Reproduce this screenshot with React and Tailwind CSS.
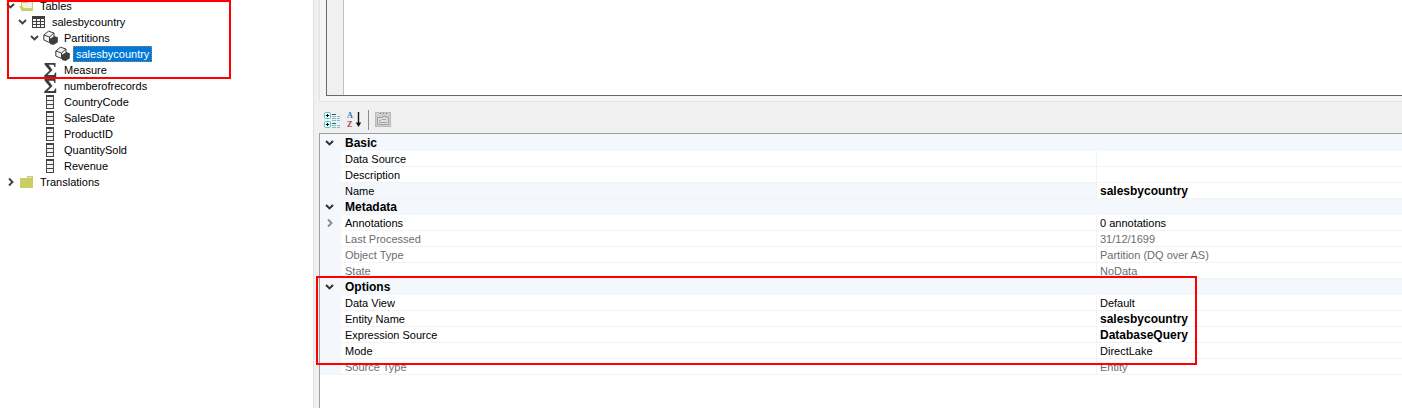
import React from "react";

const Chevron = ({ open, className = "" }) => (
  <svg viewBox="0 0 12 12" className={"h-3 w-3 " + className} fill="none" stroke="currentColor" strokeWidth="1.9" aria-hidden="true">
    <path d={open ? "M2 4 5.500 7.500 9 4" : "M4 2.500 7.500 6 4 9.500"} />
  </svg>
);

const FolderIcon = () => (
  <svg viewBox="0 0 16 16" className="h-4 w-4">
    <path d="M1 4h7V2h6v12H1z" fill="#cccc66" />
    <path d="M9 3.500h4" stroke="#e4e4b0" strokeWidth="1" />
  </svg>
);

const OpenFolderIcon = () => (
  <svg viewBox="0 0 16 16" className="h-4 w-4">
    <path d="M2 3h5V2h7v11H2z" fill="#cccc66" />
    <path d="M3 5h6V4h4v6H3z" fill="#f1f1e4" />
    <path d="M0 8h3l2 2h9v3H3z" fill="#cccc66" />
  </svg>
);

const TableIcon = () => (
  <svg viewBox="0 0 16 16" className="h-4 w-4">
    <rect x="1" y="2" width="13" height="12" fill="#3f3f3f" />
    <path d="M2 5h3v2H2zM6 5h3v2H6zM10 5h3v2h-3zM2 8h3v2H2zM6 8h3v2H6zM10 8h3v2h-3zM2 11h3v2H2zM6 11h3v2H6zM10 11h3v2h-3z" fill="#f6f6f6" />
  </svg>
);

const PartitionIcon = () => (
  <svg viewBox="0 0 16 16" className="h-4 w-4" strokeLinejoin="round">
    <path d="M7 8.500 11 6l3.800 1.200v5L10.500 15 7 14z" fill="#3d3d3d" />
    <path d="M.8 5 5.500 1.200 11 3V7L6.500 9.500V12.500L.8 10z" fill="#f4f4f4" stroke="#3d3d3d" strokeWidth="1" />
    <path d="M.8 5 6.500 7 11 3M6.500 7v5.500" fill="none" stroke="#3d3d3d" strokeWidth="1" />
  </svg>
);

const SigmaIcon = () => (
  <svg viewBox="0 0 16 16" className="h-4 w-4">
    <path d="M1.500 1h11v4h-1l-1-2.200H5.500L9.500 8l-5 5H11l1.200-2.500h1V15h-12v-1.500L6.500 8.600 1.500 2.500z" fill="#3d3d3d" />
  </svg>
);

const ColumnIcon = () => (
  <svg viewBox="0 0 16 16" className="h-4 w-4">
    <rect x="3" y="1" width="8" height="14" fill="#454545" />
    <path d="M4 3h6v3H4zM4 7h6v3H4zM4 11h6v3H4z" fill="#f4f4f4" />
  </svg>
);

const tree = [
  { label: "Tables", indent: "pl-[5px]", icon: OpenFolderIcon, open: true },
  { label: "salesbycountry", indent: "pl-[17px]", icon: TableIcon, open: true },
  { label: "Partitions", indent: "pl-[29px]", icon: PartitionIcon, open: true },
  { label: "salesbycountry", indent: "pl-[41px]", icon: PartitionIcon, selected: true },
  { label: "Measure", indent: "pl-[29px]", icon: SigmaIcon },
  { label: "numberofrecords", indent: "pl-[29px]", icon: SigmaIcon },
  { label: "CountryCode", indent: "pl-[29px]", icon: ColumnIcon },
  { label: "SalesDate", indent: "pl-[29px]", icon: ColumnIcon },
  { label: "ProductID", indent: "pl-[29px]", icon: ColumnIcon },
  { label: "QuantitySold", indent: "pl-[29px]", icon: ColumnIcon },
  { label: "Revenue", indent: "pl-[29px]", icon: ColumnIcon },
  { label: "Translations", indent: "pl-[5px]", icon: FolderIcon, open: false },
];

const groups = [
  {
    title: "Basic",
    rows: [
      { name: "Data Source", value: "" },
      { name: "Description", value: "" },
      { name: "Name", value: "salesbycountry", bold: true, active: true },
    ],
  },
  {
    title: "Metadata",
    rows: [
      { name: "Annotations", value: "0 annotations", expandable: true },
      { name: "Last Processed", value: "31/12/1699", readOnly: true },
      { name: "Object Type", value: "Partition (DQ over AS)", readOnly: true },
      { name: "State", value: "NoData", readOnly: true },
    ],
  },
  {
    title: "Options",
    rows: [
      { name: "Data View", value: "Default" },
      { name: "Entity Name", value: "salesbycountry", bold: true },
      { name: "Expression Source", value: "DatabaseQuery", bold: true },
      { name: "Mode", value: "DirectLake" },
      { name: "Source Type", value: "Entity", readOnly: true },
    ],
  },
];

function TreeItem({ label, indent, icon: Icon, open, selected }) {
  return (
    <li className={"flex h-4 items-center " + indent}>
      {open === undefined ? (
        <span className="w-3 shrink-0" />
      ) : (
        <button type="button" aria-label={"Toggle " + label} aria-expanded={open} className="shrink-0 text-[#404040]">
          <Chevron open={open} />
        </button>
      )}
      <span className="ml-[2px] shrink-0">
        <Icon />
      </span>
      <button
        type="button"
        className={
          "ml-[2px] h-4 px-[3px] leading-4 whitespace-nowrap " +
          (selected ? "bg-[#0078d7] text-white outline-1 -outline-offset-1 outline-dotted outline-[#ff8728]/60" : "")
        }
      >
        {label}
      </button>
    </li>
  );
}

function Toolbar() {
  return (
    <div role="toolbar" aria-label="Property view" className="flex h-[31px] items-center gap-[6px] border-t border-[#e3e3e3] pt-[6px] pl-[5px]">
      <button type="button" aria-label="Categorized">
        <svg viewBox="0 0 16 16" className="h-4 w-4">
          <g fill="#e8ffff" stroke="#5cc4c4">
            <rect x=".5" y=".5" width="6" height="6" rx="1" />
            <rect x=".5" y="9.500" width="6" height="6" rx="1" />
          </g>
          <path d="M2 3.500h3M3.500 2v3M2 12.500h3M3.500 11v3" stroke="#000" />
          <path d="M8 2.500h4M8 11.500h4" stroke="#555" />
          <path d="M8 4.500h4M8 6.500h4M8 8.500h4M8 13.500h4M8 15.500h4M13 4.500h3M13 6.500h3M13 8.500h3M13 13.500h3M13 15.500h3" stroke="#7cc0d4" />
        </svg>
      </button>
      <button type="button" aria-label="Alphabetical">
        <svg viewBox="0 0 16 20" className="h-5 w-4">
          <text x="1" y="8" fontSize="8" fontWeight="700" fontFamily="Liberation Serif, serif" fill="#2f75c0">A</text>
          <text x="1" y="17" fontSize="8" fontWeight="700" fontFamily="Liberation Serif, serif" fill="#974848">Z</text>
          <path d="M12.500 2v13" stroke="#111" strokeWidth="1.400" />
          <path d="M9.800 12.500h5.400L12.500 17z" fill="#111" />
        </svg>
      </button>
      <span className="h-5 w-px bg-[#8c8c8c]" />
      <button type="button" aria-label="Property pages" disabled>
        <svg viewBox="0 0 16 16" className="h-4 w-4">
          <rect x=".5" y=".5" width="15" height="14" fill="#cfcfcf" stroke="#bababa" />
          <path d="M5 1.500h1M8 1.500h1M11 1.500h1" stroke="#777" />
          <path d="M2.500 5.500h5v-1h4v1h2v7h-11z" fill="#dedede" stroke="#a0a0a0" />
          <path d="M4 8.500h2M7 7.500h4M4 10.500h8" stroke="#a4a4a4" />
        </svg>
      </button>
    </div>
  );
}

function PropertyGrid() {
  return (
    <table className="w-full table-fixed border-collapse">
      <colgroup>
        <col className="w-[21px]" />
        <col />
        <col className="w-[306px]" />
      </colgroup>
      {groups.map((group) => (
        <tbody key={group.title}>
          <tr className="h-4 bg-[#f4f7fc]">
            <td className="p-0 pl-1">
              <button type="button" aria-label={"Collapse " + group.title} className="block text-[#303030]">
                <Chevron open />
              </button>
            </td>
            <th colSpan={2} scope="rowgroup" className="p-0 pl-1 text-left text-xs leading-4 font-bold">
              {group.title}
            </th>
          </tr>
          {group.rows.map((row) => (
            <tr key={row.name} className={"h-4 " + (row.readOnly ? "text-[#6d6d6d]" : "")}>
              <td className="bg-[#f4f7fc] p-0 pl-1">
                {row.expandable && (
                  <button type="button" aria-label={"Expand " + row.name} className="block text-[#8a8a8a]">
                    <Chevron open={false} />
                  </button>
                )}
              </td>
              <th
                scope="row"
                className={
                  "p-0 pl-1 text-left leading-4 font-normal shadow-[inset_0_-1px_#f0f4fa] " +
                  (row.active ? "bg-[#f4f7fc]" : "")
                }
              >
                {row.name}
              </th>
              <td
                className={
                  "p-0 pl-1 leading-4 whitespace-nowrap shadow-[inset_1px_-1px_#f0f4fa] " +
                  (row.bold ? "text-xs font-bold" : "")
                }
              >
                {row.value}
              </td>
            </tr>
          ))}
        </tbody>
      ))}
    </table>
  );
}

export default function App() {
  return (
    <div className="flex h-screen overflow-hidden bg-[#f0f0f0] font-['Liberation_Sans',Arial,sans-serif] text-[11px] text-black">
      <nav aria-label="Model explorer" className="relative w-[314px] shrink-0 overflow-hidden border-r border-[#e0e0e0] bg-white">
        <ul className="-mt-[2px]">
          {tree.map((item, i) => (
            <TreeItem key={i} {...item} />
          ))}
        </ul>
        <div className="pointer-events-none absolute top-0 left-[7px] h-[79px] w-[224px] border-2 border-[#ff0000]" />
      </nav>
      <main className="ml-[5px] flex min-w-0 flex-1 flex-col">
        <section aria-label="Editor" className="h-[101px] shrink-0 border-l border-[#e3e3e3] bg-[#f5f5f5] pb-[5px] pl-[6px]">
          <div className="flex h-full border-b border-l border-[#696969] bg-white">
            <div className="w-[17px] border-r border-[#c0c0c0] bg-[#f0f0f0]" />
            <textarea aria-label="Expression" className="min-w-0 flex-1 resize-none outline-none" />
          </div>
        </section>
        <Toolbar />
        <section aria-label="Properties" className="relative mt-px flex-1 border-t border-l border-[#a0a0a0] bg-white">
          <div className="h-px bg-[#f4f7fc]" />
          <PropertyGrid />
          <div className="pointer-events-none absolute top-[142px] right-[205px] -left-1 h-[89px] border-2 border-[#ff0000]" />
        </section>
      </main>
    </div>
  );
}
